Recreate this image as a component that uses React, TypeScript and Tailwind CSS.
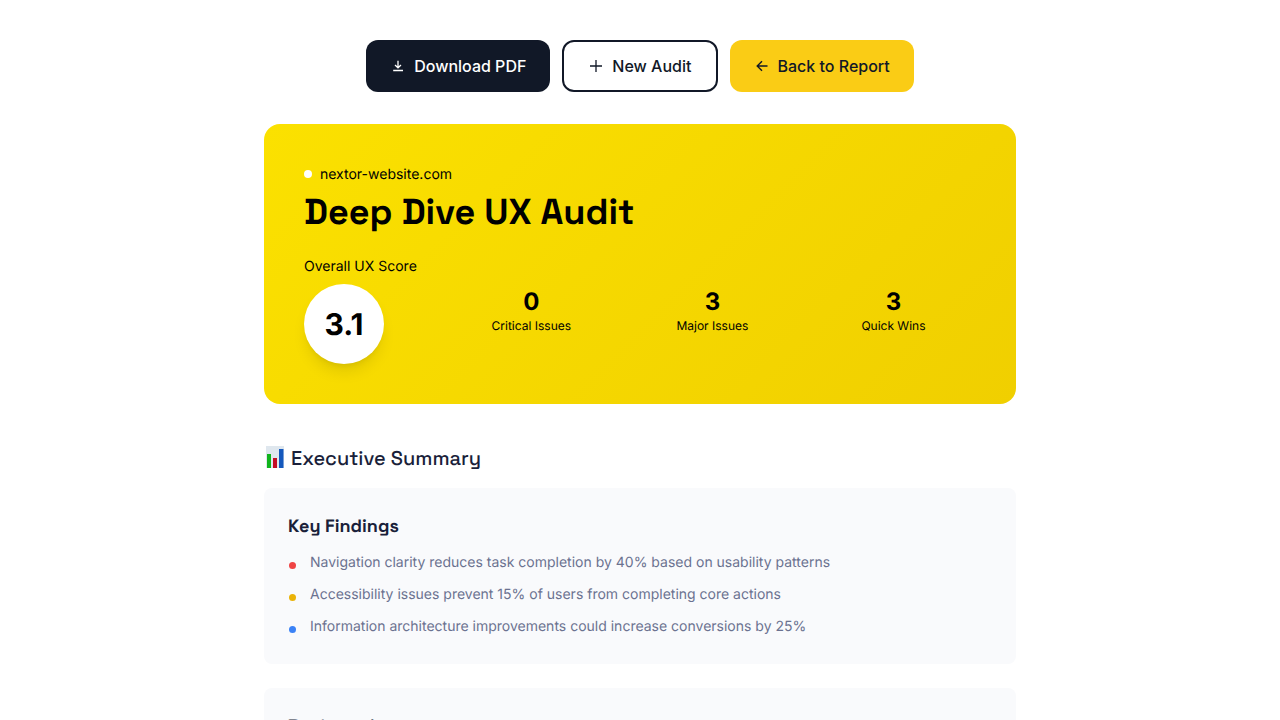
import React from "react";

const heading = "font-['Space_Grotesk','Inter',sans-serif]";

const stats = [
  { value: "0", label: "Critical Issues" },
  { value: "3", label: "Major Issues" },
  { value: "3", label: "Quick Wins" },
];

const findings = [
  { color: "text-[#ef4444]", text: "Navigation clarity reduces task completion by 40% based on usability patterns" },
  { color: "text-[#eab308]", text: "Accessibility issues prevent 15% of users from completing core actions" },
  { color: "text-[#3b82f6]", text: "Information architecture improvements could increase conversions by 25%" },
];

function Icon({ d, width = 1.3 }: { d: string; width?: number }) {
  return (
    <svg className="size-4 shrink-0" viewBox="0 0 16 16" fill="none" stroke="currentColor" strokeWidth={width}>
      <path d={d} />
    </svg>
  );
}

export default function App() {
  return (
    <div className="h-[720px] overflow-hidden bg-white font-['Inter',sans-serif] antialiased [text-rendering:geometricPrecision]">
      <main className="mx-auto w-[752px] pt-10">
        <div className="flex justify-center gap-3 text-base font-medium text-[#111827]">
          <button className="flex h-[52px] w-[184px] items-center gap-[8.2px] rounded-xl bg-[#111827] pl-6 text-white">
            <Icon d="M8 2.8V9.6M5 7l3 2.8L11 7M3.2 12.5h9.8" />
            Download PDF
          </button>
          <button className="flex h-[52px] w-[156px] items-center gap-[8.3px] rounded-xl border-2 border-[#111827] bg-white pl-6">
            <Icon d="M8 2v12M2 8h12" />
            New Audit
          </button>
          <button className="flex h-[52px] w-[184px] items-center gap-2 rounded-xl bg-[#facc15] pl-[23.5px]">
            <Icon width={1.4} d="M13.5 8H3.5M8 3.2 3.2 8 8 12.8" />
            Back to Report
          </button>
        </div>

        <section className="mt-8 h-[280px] rounded-2xl bg-[linear-gradient(135deg,#fbe100_0%,#f0cf00_100%)] p-10 text-black">
          <div className="flex h-5 items-center gap-2 text-sm">
            <span className="size-2 rounded-full bg-white" />
            <span className="pt-0.5">nextor-website.com</span>
          </div>
          <h1 className={`${heading} mt-2 h-10 whitespace-nowrap text-4xl leading-10 font-bold`}>Deep Dive UX Audit</h1>
          <div className="mt-6 flex items-center gap-8">
            <div className="shrink-0">
              <div className="h-5 pt-px text-sm leading-5">Overall UX Score</div>
              <div className="mt-2 flex size-20 items-center justify-center rounded-full bg-white pt-0.5 text-3xl font-bold shadow-lg">3.1</div>
            </div>
            <div className="grid flex-1 grid-cols-3 gap-4">
              {stats.map((s) => (
                <div key={s.label} className="text-center">
                  <div className="text-2xl leading-8 font-bold">{s.value}</div>
                  <div className="text-xs">{s.label}</div>
                </div>
              ))}
            </div>
          </div>
        </section>

        <h2 className={`${heading} mt-10 flex h-7 items-center text-xl font-medium text-[#1a1f3a]`}>
          <svg className="mr-[5px] mb-[2px] size-[22px]" viewBox="0 0 22 22">
            <path fill="#dfe7ee" d="M2 0h18v22H2z" />
            <path fill="#10b41c" d="M3 8h4v14H3z" />
            <path fill="#c30c24" d="M9 12h4v10H9z" />
            <path fill="#1558bd" d="M15 3h4.5v19H15z" />
          </svg>
          Executive Summary
        </h2>

        <section className="mt-4 h-44 rounded-lg bg-[#f9fafc] p-6">
          <h3 className={`${heading} h-7 pt-px text-lg leading-7 font-semibold text-[#1a1f3a]`}>Key Findings</h3>
          <ul className="mt-3 flex flex-col gap-3 text-sm text-[#6b7290]">
            {findings.map((f) => (
              <li key={f.text} className="flex h-5 items-center gap-[13px]">
                <span className={`${f.color} flex w-[9px] justify-center pt-[7px]`}>
                  <span className="size-[7px] rounded-full bg-current" />
                </span>
                <span className="pt-0.5">{f.text}</span>
              </li>
            ))}
          </ul>
        </section>

        <section className="mt-6 h-44 rounded-lg bg-[#f9fafc] p-6">
          <h3 className={`${heading} h-7 pt-px text-lg leading-7 font-medium text-[#1a1f3a]`}>Business Impact</h3>
        </section>
      </main>
    </div>
  );
}
